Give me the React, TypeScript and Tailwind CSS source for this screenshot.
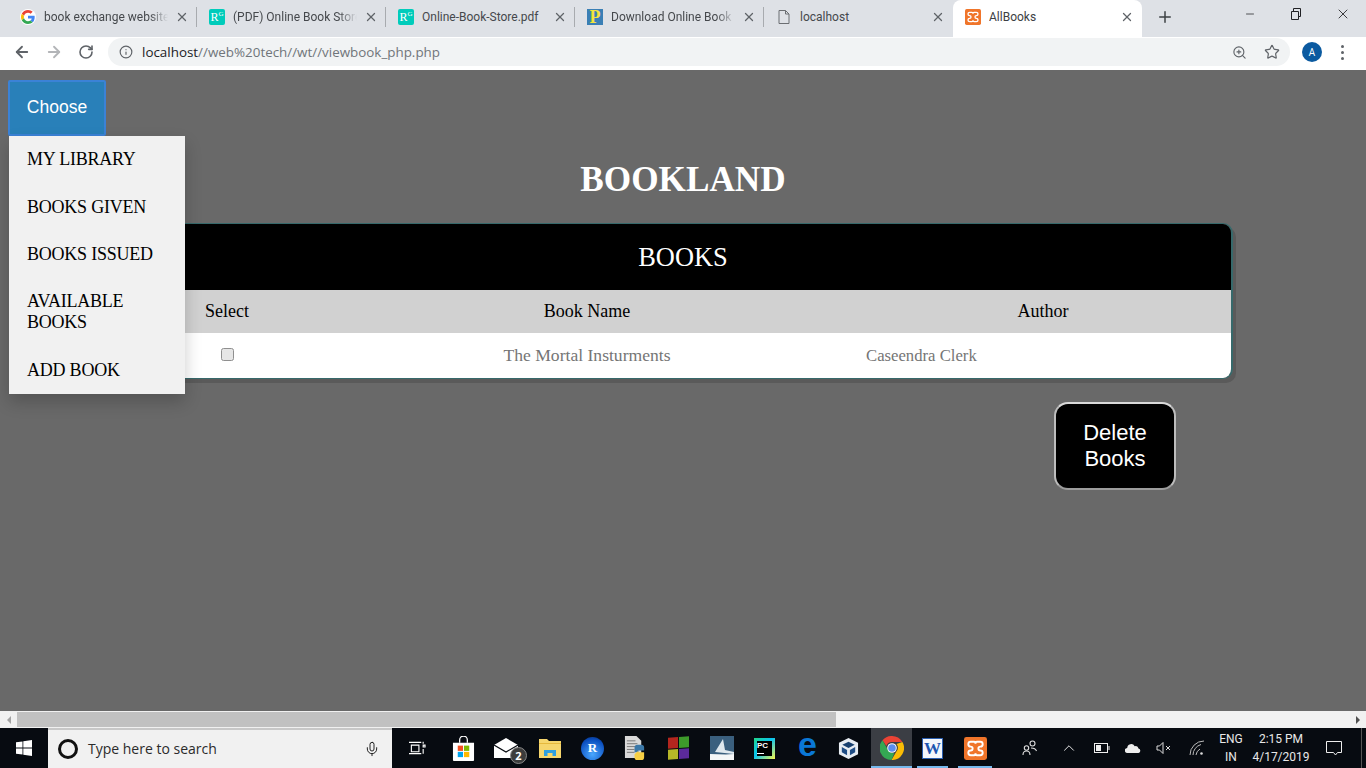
import { ArrowLeft, ArrowRight, RotateCw, Info, ZoomIn, Star, X, Plus, Minus, Mic, ChevronUp } from 'lucide-react'
import type { ReactNode } from 'react'

const uiFont = "font-['Open_Sans',sans-serif]"

function GoogleIcon() {
  return (
    <div className="w-4 h-4 rounded-full bg-white flex items-center justify-center">
      <svg viewBox="0 0 48 48" className="w-[14px] h-[14px]">
        <path fill="#EA4335" d="M24 9.5c3.5 0 6.7 1.3 9.1 3.5l6.8-6.8C35.800 2.400 30.300 0 24 0 14.600 0 6.500 5.400 2.600 13.200l7.900 6.200C12.400 13.600 17.700 9.500 24 9.500z" />
        <path fill="#4285F4" d="M46.900 24.500c0-1.600-.1-3.100-.4-4.500H24v9h12.900c-.6 3-2.200 5.500-4.700 7.200l7.700 6c4.500-4.200 7-10.300 7-17.700z" />
        <path fill="#FBBC05" d="M10.500 28.600c-.5-1.400-.8-3-.8-4.600s.3-3.200.8-4.600l-7.900-6.200C.9 16.500 0 20.100 0 24s.9 7.500 2.600 10.800l7.900-6.200z" />
        <path fill="#34A853" d="M24 48c6.500 0 11.900-2.100 15.900-5.800l-7.700-6c-2.100 1.400-4.900 2.300-8.200 2.300-6.300 0-11.600-4.200-13.500-9.900l-7.900 6.200C6.500 42.600 14.600 48 24 48z" />
      </svg>
    </div>
  )
}

function ResearchGateIcon() {
  return (
    <div className="w-4 h-4 rounded-[2px] bg-[#00ccbb] flex items-start justify-center text-white font-['Liberation_Serif',serif] text-[12px] leading-[16px]">
      R<span className="text-[7px] leading-[10px]">G</span>
    </div>
  )
}

function PythonDocIcon() {
  return (
    <div className="w-4 h-4 bg-[#3a7fb5] flex items-center justify-center text-[#f2e33c] font-bold font-['Liberation_Serif',serif] text-[18px] leading-none">
      P
    </div>
  )
}

function FileIcon() {
  return (
    <svg viewBox="0 0 16 16" className="w-4 h-4" fill="none" stroke="#6b6e72" strokeWidth="1">
      <path d="M3 1.500h6.500L13 5v9.500H3z" />
      <path d="M9.500 1.500V5H13" />
    </svg>
  )
}

function XamppIcon({ size = 16 }: { size?: number }) {
  return (
    <svg viewBox="0 0 24 24" width={size} height={size}>
      <rect width="24" height="24" rx="2.500" fill="#f0752a" />
      <path d="M7 5h3.500c1 0 1.500.8 1.500 2 0-1.200.5-2 1.500-2H17c1.500 0 2.500 1 2.500 2.500S18.500 10 17 10c-1 0-2 .8-2 2s1 2 2 2c1.500 0 2.500 1 2.500 2.500S18.500 19 17 19h-3.500c-1 0-1.500-.8-1.500-2 0 1.200-.5 2-1.500 2H7c-1.500 0-2.500-1-2.500-2.500S5.500 14 7 14c1 0 2-.8 2-2s-1-2-2-2C5.500 10 4.500 9 4.500 7.500S5.500 5 7 5z" fill="none" stroke="#fff" strokeWidth="2" />
    </svg>
  )
}

const tabs: { title: string; icon: ReactNode; active?: boolean; fade?: boolean; sep?: boolean }[] = [
  { title: 'book exchange website', icon: <GoogleIcon />, fade: true, sep: true },
  { title: '(PDF) Online Book Store', icon: <ResearchGateIcon />, fade: true, sep: true },
  { title: 'Online-Book-Store.pdf', icon: <ResearchGateIcon />, sep: true },
  { title: 'Download Online Book', icon: <PythonDocIcon />, fade: true, sep: true },
  { title: 'localhost', icon: <FileIcon /> },
  { title: 'AllBooks', icon: <XamppIcon />, active: true },
]

function ChromeBar() {
  return (
    <>
      <div className="h-[37px] bg-[#dee1e6] flex pl-2 font-['Roboto',sans-serif]">
        {tabs.map(t => (
          <div key={t.title} className={`relative w-[189px] h-[37px] pb-[3px] flex items-center pl-3 pr-2 text-xs ${t.active ? 'bg-white rounded-t-lg text-[#3c4043]' : 'text-[#45484c]'}`}>
            <div className="w-4 h-4 flex-shrink-0">{t.icon}</div>
            <div className={`ml-2 w-[124px] flex-shrink-0 overflow-hidden whitespace-nowrap ${t.fade ? '[mask-image:linear-gradient(to_right,black_85%,transparent)]' : ''}`}>{t.title}</div>
            <X className="w-[14px] h-[14px] ml-auto flex-shrink-0 text-[#5f6368]" strokeWidth={2.2} />
            {t.sep && <div className="absolute right-0 top-[7px] h-[20px] w-px bg-[#a8abaf]" />}
          </div>
        ))}
        <div className="h-[34px] w-[46px] flex items-center justify-center">
          <Plus className="w-[18px] h-[18px] text-[#3c4043]" strokeWidth={2} />
        </div>
        <div className="ml-auto h-[28px] flex text-[#202124]">
          <div className="w-[46px] flex items-center justify-center"><Minus className="w-3 h-3" strokeWidth={1.5} /></div>
          <div className="w-[46px] flex items-center justify-center">
            <svg viewBox="0 0 12 12" className="w-3 h-3" fill="none" stroke="currentColor"><path d="M1.500 3.500h7v8h-7zM3.500 3.500V.5h7v8h-2" /></svg>
          </div>
          <div className="w-[47px] flex items-center justify-center"><X className="w-4 h-4" strokeWidth={1.3} /></div>
        </div>
      </div>
      <div className={`h-[33px] pb-[3px] bg-white flex items-center ${uiFont}`}>
        <ArrowLeft className="w-[18px] h-[18px] ml-[13px] text-[#5f6368]" strokeWidth={2.4} />
        <ArrowRight className="w-[18px] h-[18px] ml-[14px] text-[#b3b5b8]" strokeWidth={2.4} />
        <RotateCw className="w-4 h-4 ml-[15px] text-[#5f6368]" strokeWidth={2.4} />
        <div className="ml-[14px] w-[1182px] h-[28px] rounded-full bg-[#f1f3f4] flex items-center">
          <Info className="w-[14px] h-[14px] ml-[11px] text-[#5f6368]" strokeWidth={2} />
          <div className="ml-[9px] text-[13.4px] text-[#70757a]"><span className="text-[#202124]">localhost</span>//web%20tech//wt//viewbook_php.php</div>
          <ZoomIn className="w-[15px] h-[15px] ml-auto text-[#5f6368]" strokeWidth={1.8} />
          <Star className="w-4 h-4 ml-[17px] mr-[10px] text-[#5f6368]" strokeWidth={1.8} />
        </div>
        <div className="ml-3 w-5 h-5 rounded-full bg-[#0b5aa0] text-white text-[10px] flex items-center justify-center">A</div>
        <div className="ml-[19px] flex flex-col gap-[3px]">
          <div className="w-[3px] h-[3px] rounded-full bg-[#5f6368]" />
          <div className="w-[3px] h-[3px] rounded-full bg-[#5f6368]" />
          <div className="w-[3px] h-[3px] rounded-full bg-[#5f6368]" />
        </div>
      </div>
    </>
  )
}

const menuItems = ['MY LIBRARY', 'BOOKS GIVEN', 'BOOKS ISSUED', 'AVAILABLE BOOKS', 'ADD BOOK']

function Dropdown() {
  return (
    <div className="absolute left-[9px] top-[66px] w-[176px] z-10 bg-[#f1f1f1] shadow-[0_8px_16px_0_rgba(0,0,0,0.2)] font-['Liberation_Serif',serif] text-[18px] leading-[21px] tracking-[-0.22px] text-black">
      {menuItems.map(m => (
        <div key={m} className="px-[18px] py-[13.2px]">{m}</div>
      ))}
    </div>
  )
}

function BooksPage() {
  return (
    <main className="relative flex-1 bg-[#696969] flex flex-col font-['Liberation_Serif',serif] overflow-hidden">
      <button className="ml-2 mt-[10px] w-[98px] h-[56px] pb-[2px] bg-[#2980b9] border-2 border-[#3b82d6] rounded-[2px] text-white text-[17.5px] font-['Liberation_Sans',sans-serif]">Choose</button>
      <Dropdown />
      <h1 className="mt-[23px] text-center text-white font-bold text-[35.2px] leading-[42px]">BOOKLAND</h1>
      <div className="mt-[22px] ml-[134px] w-[1099px] rounded-[10px] border border-r-2 border-[#37696b] shadow-[3px_4px_0_#5a5a5a] overflow-hidden text-[18px]">
        <div className="h-[66px] pt-[2px] bg-black text-white text-[26.4px] flex items-center justify-center">BOOKS</div>
        <div className="h-[43px] bg-[#d1d1d1] text-black grid grid-cols-[184px_536px_376px] items-center text-center">
          <div>Select</div>
          <div>Book Name</div>
          <div>Author</div>
        </div>
        <div className="h-[45px] bg-white text-[#757575] grid grid-cols-[184px_536px_376px] items-center">
          <div className="flex justify-center -mt-[3px]"><div className="w-[13px] h-[13px] rounded-[2.500px] border border-[#8f8f8f] bg-[#e6e6e6]" /></div>
          <div className="text-center text-[17.6px]">The Mortal Insturments</div>
          <div className="pl-[11px] text-[16.7px]">Caseendra Clerk</div>
        </div>
      </div>
      <button className="mt-[23px] ml-[1054px] w-[122px] h-[88px] bg-black rounded-[14px] border-2 border-t-[#d9d9d9] border-x-[#bdbdbd] border-b-[#9c9c9c] text-white text-[22px] leading-[26px] font-['Liberation_Sans',sans-serif]">Delete<br />Books</button>
    </main>
  )
}

function Scrollbar() {
  return (
    <div className="h-[17px] bg-[#f1f1f1] flex items-center">
      <div className="w-[17px] h-[17px] flex items-center justify-center">
        <div className="w-0 h-0 border-y-[4px] border-y-transparent border-r-[4px] border-r-[#a3a3a3]" />
      </div>
      <div className="w-[819px] h-[15px] bg-[#c1c1c1]" />
      <div className="ml-auto w-[17px] h-[17px] flex items-center justify-center">
        <div className="w-0 h-0 border-y-[4px] border-y-transparent border-l-[4px] border-l-[#505050]" />
      </div>
    </div>
  )
}

function Slot({ w, active, running, children }: { w: string; active?: boolean; running?: boolean; children: ReactNode }) {
  return (
    <div className={`relative h-10 flex items-center justify-center ${w} ${active ? 'bg-[#3b3e44]' : ''}`}>
      {children}
      {running && <div className={`absolute bottom-0 h-[2px] bg-[#76b9ed] ${active ? 'inset-x-0' : 'inset-x-[5px]'}`} />}
    </div>
  )
}

function Taskbar() {
  return (
    <div className={`h-10 bg-[#070b11] flex text-white ${uiFont}`}>
      <div className="w-12 flex items-center justify-center">
        <svg viewBox="0 0 16 16" className="w-4 h-4" fill="#fff">
          <path d="M0 2.300 6.500 1.400V7.600H0zM7.300 1.300 16 0V7.600H7.300zM0 8.400H6.500V14.600L0 13.700zM7.300 8.400H16V16L7.300 14.700z" />
        </svg>
      </div>
      <div className="w-[344px] bg-[#f1f1f1] flex items-center text-[#2b2b2b] border-t-2 border-[#c8c8c8]">
        <div className="ml-[10px] w-5 h-5 rounded-full border-[3px] border-[#111]" />
        <span className="ml-[10px] text-[14px] leading-none">Type here to search</span>
        <Mic className="ml-auto mr-[12px] w-4 h-4 text-[#222]" strokeWidth={1.5} />
      </div>
      <Slot w="w-[50px]">
        <svg viewBox="0 0 18 14" className="w-[17px] h-[14px]" fill="none" stroke="#fff" strokeWidth="1.200">
          <path d="M0 1h13M2.500 4h8v7h-8zM0 13h13M15 .5v2M15 4h2v2h-2zM15 8v5" />
        </svg>
      </Slot>
      <Slot w="w-[43px]">
        <svg viewBox="0 0 24 26" className="w-[23px] h-[25px]">
          <path d="M8 7V4a4 4 0 0 1 8 0v3" fill="none" stroke="#fff" strokeWidth="1.300" />
          <path d="M1 7h22v18a1 1 0 0 1-1 1H2a1 1 0 0 1-1-1z" fill="#fff" />
          <rect x="6" y="10" width="5.500" height="5.500" fill="#f25022" />
          <rect x="12.500" y="10" width="5.500" height="5.500" fill="#7fba00" />
          <rect x="6" y="16.500" width="5.500" height="5.500" fill="#00a4ef" />
          <rect x="12.500" y="16.500" width="5.500" height="5.500" fill="#ffb900" />
        </svg>
      </Slot>
      <Slot w="w-[43px]">
        <svg viewBox="0 0 24 20" className="w-6 h-5 -ml-[2px]">
          <path d="M0 7 12 0l12 7v13H0z" fill="#fff" />
          <path d="M0 7l12 7 12-7" fill="none" stroke="#070b11" strokeWidth="1.200" />
        </svg>
        <div className="absolute left-[25px] top-[19px] w-[17px] h-[17px] rounded-full bg-[#3c3c3c] border border-[#888] text-[11px] font-bold flex items-center justify-center leading-none">2</div>
      </Slot>
      <Slot w="w-[43px]">
        <svg viewBox="0 0 22 20" className="w-[22px] h-5">
          <path d="M0 1h8l2 2h12v17H0z" fill="#f6d66d" />
          <path d="M0 5h22v1H0z" fill="#e6b93d" />
          <path d="M5 18v-6h12v6h-3.500v-3h-5v3z" fill="#2f9fe0" />
        </svg>
      </Slot>
      <Slot w="w-[43px]">
        <div className="w-[23px] h-[23px] rounded-full bg-[radial-gradient(circle_at_50%_75%,#4aa8ff,#0b4fc0_70%,#062a70)] text-white font-['Liberation_Serif',serif] font-bold text-[13px] flex items-center justify-center">R</div>
      </Slot>
      <Slot w="w-[43px]">
        <svg viewBox="0 0 24 26" className="w-[23px] h-[25px]">
          <path d="M1 0h12l5 5v18H1z" fill="#d9d9d9" />
          <path d="M3 5h9M3 8h11M3 11h11M3 14h8M3 17h8" stroke="#777" strokeWidth="1" />
          <path d="M14 9h4a3 3 0 0 1 3 3v3h-6v2h-4v-5a3 3 0 0 1 3-3z" fill="#3b78a8" />
          <path d="M14 25h4a3 3 0 0 0 3-3v-5h-6v-1h-1l-3 3v3a3 3 0 0 0 3 3z" fill="#f7cf45" />
        </svg>
      </Slot>
      <Slot w="w-[43px]">
        <div className="w-[21px] h-[22px] grid grid-cols-2 gap-[1px] skew-y-[-4deg]">
          <div className="bg-[#b3261e]" />
          <div className="bg-[#3d9a2b]" />
          <div className="bg-[#b7b728]" />
          <div className="bg-[#5b2a9b]" />
        </div>
      </Slot>
      <Slot w="w-[43px]">
        <svg viewBox="0 0 24 24" className="w-6 h-6">
          <rect width="24" height="24" fill="#3a5f7e" />
          <path d="M5 16 13 3l2 11 9 2v2z" fill="#dfe8ee" />
          <path d="M0 18c8 0 16 1 24 0v6H0z" fill="#f4f6f7" />
        </svg>
      </Slot>
      <Slot w="w-[43px]">
        <div className="w-[21px] h-[21px] bg-[linear-gradient(135deg,#21d789,#07c3f2_45%,#fcf84a)] p-[3px]">
          <div className="w-full h-full bg-black text-white font-bold text-[8px] leading-[9px] font-['Liberation_Sans',sans-serif]">PC<div className="mt-[3px] w-[7px] h-px bg-white" /></div>
        </div>
      </Slot>
      <Slot w="w-[43px]">
        <div className="text-[#0a78d6] text-[34px] leading-none font-bold font-['Liberation_Sans',sans-serif] -mt-2">e</div>
      </Slot>
      <Slot w="w-[42px]">
        <svg viewBox="0 0 22 24" className="w-[21px] h-[23px] -ml-1">
          <path d="M11 1 21 6v12L11 23 1 18V6z" fill="#e8edf3" />
          <path d="M11 5 17.500 8 11 11.500 4.500 8z" fill="#18406f" />
          <path d="M4 10.500 9.500 13.500V19L4 16zM18 10.500 12.500 13.500V19L18 16z" fill="#1f4d85" />
        </svg>
      </Slot>
      <Slot w="w-[41px]" active running>
        <svg viewBox="0 0 24 24" className="w-6 h-6">
          <path d="M12 0a12 12 0 0 1 10.400 6H12a6 6 0 0 0-5.700 4L2.500 4.200A12 12 0 0 1 12 0z" fill="#ea4335" />
          <path d="M22.400 6A12 12 0 0 1 11.500 24l4.900-8.500A6 6 0 0 0 16.500 8z" fill="#fbbc05" />
          <path d="M11.500 24A12 12 0 0 1 2.500 4.200L7.400 13a6 6 0 0 0 7 4z" fill="#34a853" />
          <circle cx="12" cy="12" r="4.800" fill="#fff" />
          <circle cx="12" cy="12" r="3.800" fill="#5b8def" />
        </svg>
      </Slot>
      <Slot w="w-[41px]" running>
        <div className="w-[21px] h-[21px] bg-[#f4f7fb] border border-[#2b5fb0] text-[#1d55b0] text-[17px] font-bold font-['Liberation_Serif',serif] leading-[19px] text-center">W</div>
      </Slot>
      <Slot w="w-[44px]" running><XamppIcon size={23} /></Slot>

      <div className="ml-auto flex text-[#e8e8e8] font-['Roboto',sans-serif]">
        <Slot w="w-[39px]">
          <svg viewBox="0 0 16 16" className="w-4 h-4" fill="none" stroke="#ddd" strokeWidth="1.100">
            <circle cx="10.500" cy="3.500" r="2.500" /><circle cx="4.500" cy="8" r="2.200" />
            <path d="M1 15c0-2.500 1.500-4 3.500-4S8 12.500 8 15M9 8c3 0 5 1.500 5.500 3" />
          </svg>
        </Slot>
        <Slot w="w-[40px]"><ChevronUp className="w-[18px] h-[18px]" strokeWidth={1.300} /></Slot>
        <Slot w="w-[26px]">
          <svg viewBox="0 0 16 10" className="w-4 h-[10px]" fill="none" stroke="#eee">
            <rect x=".5" y=".5" width="13" height="9" /><rect x="2" y="2" width="5" height="6" fill="#eee" stroke="none" /><path d="M15 3v4" />
          </svg>
        </Slot>
        <Slot w="w-[35px]">
          <svg viewBox="0 0 16 10" className="w-4 h-[10px]" fill="#eee">
            <path d="M2.500 10a2.500 2.500 0 0 1-.3-5A4 4 0 0 1 9.700 3.200 3 3 0 0 1 13.500 5.500 2.300 2.300 0 0 1 13.500 10z" />
          </svg>
        </Slot>
        <Slot w="w-[28px]">
          <svg viewBox="0 0 16 14" className="w-4 h-[14px]" fill="none" stroke="#ddd" strokeWidth="1">
            <path d="M1 5h2.500L7 1.500v11L3.500 9H1zM10 5l4 4M14 5l-4 4" />
          </svg>
        </Slot>
        <Slot w="w-[38px]">
          <svg viewBox="0 0 16 16" className="w-4 h-4" fill="none" stroke="#bbb" strokeWidth="1">
            <path d="M1 15A14 14 0 0 1 15 1M4 15A11 11 0 0 1 12 4.500M7 15a8 8 0 0 1 4-6" />
            <circle cx="12.500" cy="13.500" r="1.300" fill="#ddd" stroke="none" />
          </svg>
        </Slot>
        <div className="w-[30px] text-[12px] leading-[18px] text-center flex flex-col justify-center"><div>ENG</div><div>IN</div></div>
        <div className="w-[70px] text-[12px] leading-[18px] text-center flex flex-col justify-center"><div>2:15 PM</div><div>4/17/2019</div></div>
        <Slot w="w-[36px]">
          <svg viewBox="0 0 16 16" className="w-4 h-4" fill="none" stroke="#eee">
            <path d="M.5 1.500h15v11h-4l-2 2.500-2-2.500h-7z" />
          </svg>
        </Slot>
        <div className="w-[14px] flex items-stretch"><div className="ml-[9px] w-px bg-[#555]" /></div>
      </div>
    </div>
  )
}

export default function App() {
  return (
    <div className="h-screen w-full flex flex-col overflow-hidden">
      <ChromeBar />
      <BooksPage />
      <Scrollbar />
      <Taskbar />
    </div>
  )
}
